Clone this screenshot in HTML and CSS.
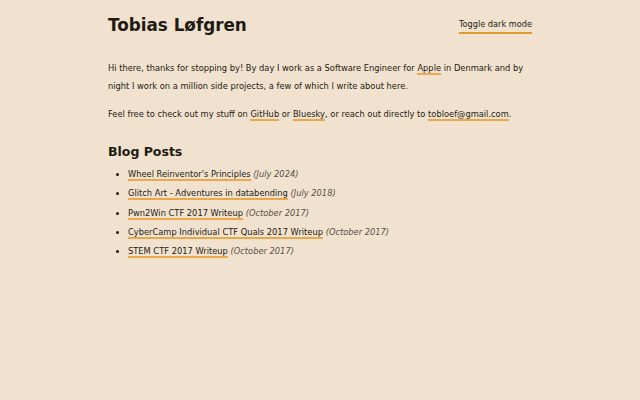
FILE: index.html
```html
<!DOCTYPE html>
<html>
<head>
<meta charset="utf-8">
<link rel="stylesheet" href="styles.css">
</head>
<body>
<div class="page">
  <header class="header">
    <h1 class="title">Tobias Løfgren</h1>
    <a class="toggle" href="#">Toggle dark mode</a>
  </header>
  <p class="text">Hi there, thanks for stopping by! By day I work as a Software Engineer for <a href="#">Apple</a> in Denmark and by night I work on a million side projects, a few of which I write about here.</p>
  <p class="text">Feel free to check out my stuff on <a href="#">GitHub</a> or <a href="#">Bluesky</a>, or reach out directly to <a href="#">tobloef@gmail.com</a>.</p>
  <h2 class="subtitle">Blog Posts</h2>
  <ul class="posts">
    <li><a href="#">Wheel Reinventor's Principles</a> <em>(July 2024)</em></li>
    <li><a href="#">Glitch Art - Adventures in databending</a> <em>(July 2018)</em></li>
    <li><a href="#">Pwn2Win CTF 2017 Writeup</a> <em>(October 2017)</em></li>
    <li><a href="#">CyberCamp Individual CTF Quals 2017 Writeup</a> <em>(October 2017)</em></li>
    <li><a href="#">STEM CTF 2017 Writeup</a> <em>(October 2017)</em></li>
  </ul>
</div>
</body>
</html>
```
FILE: styles.css
```css
html, body {
  margin: 0;
  padding: 0;
  background: #f0e2ce;
}
body {
  font-family: "DejaVu Sans", sans-serif;
  color: #1f1a14;
  font-size: 8.3px;
}
.page {
  width: 424px;
  margin: 0 auto;
  padding-top: 14px;
}
.header {
  display: flex;
  justify-content: space-between;
  align-items: center;
  height: 22px;
}
.title {
  font-size: 16.8px;
  line-height: 22px;
  margin: 0;
  font-weight: bold;
}
a {
  color: inherit;
  text-decoration: none;
  border-bottom: 2px solid #eaa84a;
}
.toggle {
  font-size: 8.2px;
  padding-bottom: 3px;
  margin-top: 3px;
  border-bottom-color: #e39a2c;
}
.text {
  line-height: 18.5px;
  margin: 22.75px 0 0;
}
.text + .text {
  margin-top: 9px;
}
.subtitle {
  font-size: 12.5px;
  line-height: 16px;
  margin: 20.75px 0 5px;
}
.posts {
  margin: 0;
  padding-left: 20px;
  line-height: 19.3px;
}
.posts em {
  color: #5a5048;
}
```
